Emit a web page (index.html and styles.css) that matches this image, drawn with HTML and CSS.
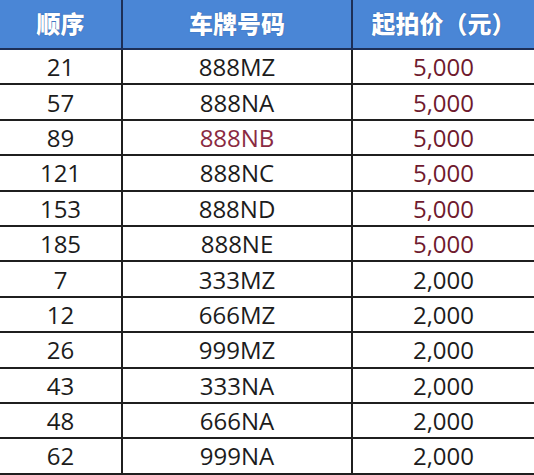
FILE: index.html
```html
<!DOCTYPE html>
<html lang="zh">
<head>
<meta charset="utf-8">
<link rel="stylesheet" href="styles.css">
</head>
<body>
<div class="table">
  <div class="row head">
    <div class="cell">顺序</div>
    <div class="cell">车牌号码</div>
    <div class="cell">起拍价（元）</div>
  </div>
  <div class="row"><div class="cell">21</div><div class="cell">888MZ</div><div class="cell red">5,000</div></div>
  <div class="row"><div class="cell">57</div><div class="cell">888NA</div><div class="cell red">5,000</div></div>
  <div class="row"><div class="cell">89</div><div class="cell pink">888NB</div><div class="cell red">5,000</div></div>
  <div class="row"><div class="cell">121</div><div class="cell">888NC</div><div class="cell red">5,000</div></div>
  <div class="row"><div class="cell">153</div><div class="cell">888ND</div><div class="cell red">5,000</div></div>
  <div class="row"><div class="cell">185</div><div class="cell">888NE</div><div class="cell red">5,000</div></div>
  <div class="row"><div class="cell">7</div><div class="cell">333MZ</div><div class="cell">2,000</div></div>
  <div class="row"><div class="cell">12</div><div class="cell">666MZ</div><div class="cell">2,000</div></div>
  <div class="row"><div class="cell">26</div><div class="cell">999MZ</div><div class="cell">2,000</div></div>
  <div class="row"><div class="cell">43</div><div class="cell">333NA</div><div class="cell">2,000</div></div>
  <div class="row"><div class="cell">48</div><div class="cell">666NA</div><div class="cell">2,000</div></div>
  <div class="row"><div class="cell">62</div><div class="cell">999NA</div><div class="cell">2,000</div></div>
</div>
</body>
</html>
```
FILE: styles.css
```css
html, body {
  margin: 0;
  padding: 0;
  background: #ffffff;
}
.table {
  width: 534px;
  font-family: "Open Sans", "Noto Sans CJK SC", sans-serif;
  color: #1c1c1c;
}
.row {
  display: grid;
  grid-template-columns: 121px 230px 1fr;
  height: 35.4px;
  box-sizing: border-box;
  border-bottom: 2px solid #1f1f1f;
}
.cell {
  display: flex;
  align-items: center;
  justify-content: center;
  font-size: 24px;
  line-height: 1;
  padding-top: 1px;
}
.cell + .cell {
  border-left: 2px solid #1f1f1f;
}
.head {
  height: 50px;
  background: #4a86d6;
  border-bottom-color: #1d2f57;
}
.head .cell {
  font-family: "Noto Sans CJK SC", sans-serif;
  font-weight: 900;
  font-size: 24px;
  color: #ffffff;
  text-shadow: 0 0 1px rgba(20, 50, 110, 0.7);
  padding-top: 0;
  padding-bottom: 2px;
}
.head .cell + .cell {
  border-left-color: #1d2f57;
}
.red {
  color: #6f1a2e;
}
.pink {
  color: #8a2a42;
}
```
